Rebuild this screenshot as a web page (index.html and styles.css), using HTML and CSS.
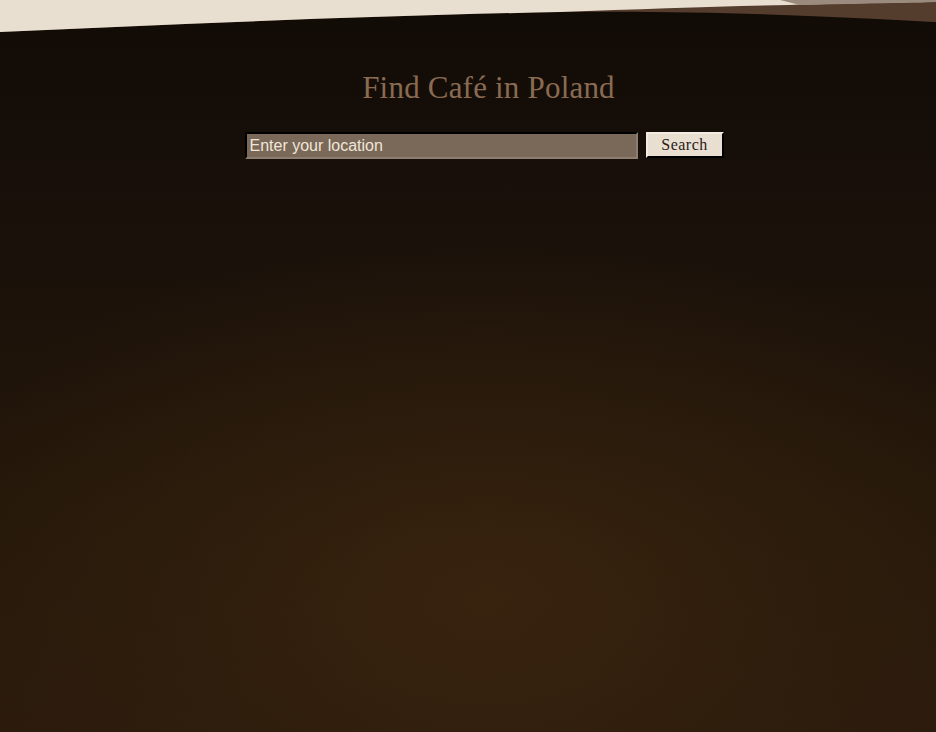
FILE: index.html
```html
<!DOCTYPE html>
<html lang="en">
<head>
<meta charset="utf-8">
<title>Find Café in Poland</title>
<link rel="stylesheet" href="styles.css">
</head>
<body>
<svg class="wave" viewBox="0 0 936 40" preserveAspectRatio="none" aria-hidden="true">
  <path d="M0 0 H936 V22 C860 18 720 10 560 12 C360 16 180 24 0 32 Z" fill="#553d2e"/>
  <path d="M0 0 H936 V2 C860 3 720 6 560 12 C360 16 180 24 0 32 Z" fill="#e8dfd0"/>
  <path d="M780 0 H936 V2 C890 3 840 4 800 5 Z" fill="#9a8b7e"/>
</svg>
<main class="main">
  <h1 class="title">Find Café in Poland</h1>
  <form class="search">
    <input class="search-input" type="text" value="Enter your location">
    <button class="search-btn" type="button">Search</button>
  </form>
</main>
</body>
</html>
```
FILE: styles.css
```css
html, body {
  margin: 0;
  height: 100%;
}
body {
  position: relative;
  min-height: 732px;
  background:
    radial-gradient(ellipse 65% 50% at 52% 82%, rgba(58,36,15,0.9) 0%, rgba(52,33,14,0.5) 55%, rgba(40,26,13,0) 100%),
    linear-gradient(to bottom, #110b06 0%, #1a110a 35%, #241709 70%, #2a1a0c 100%);
  font-family: "Liberation Serif", serif;
  overflow: hidden;
}
.wave {
  position: absolute;
  top: 0;
  left: 0;
  width: 936px;
  height: 40px;
  display: block;
}
.main {
  display: flex;
  flex-direction: column;
  align-items: center;
  padding: 70px 0 0 32px;
}
.title {
  margin: 0 0 0 9px;
  font-family: "Liberation Serif", serif;
  font-weight: normal;
  font-size: 31px;
  color: #8a6b52;
  letter-spacing: 0.2px;
  line-height: 36px;
}
.search {
  display: flex;
  gap: 8px;
  margin-top: 26px;
  align-items: flex-start;
}
.search-input {
  box-sizing: border-box;
  width: 393px;
  height: 27px;
  margin: 0;
  padding: 0 3px;
  background: #7a6858;
  color: #efe6d9;
  border: 2px inset #8d7d6e;
  border-top-color: #2a1f17;
  border-left-color: #2a1f17;
  font-family: "Liberation Sans", Arial, sans-serif;
  font-size: 16px;
}
.search-btn {
  box-sizing: border-box;
  width: 78px;
  height: 26px;
  margin: 0;
  padding: 0;
  background: #e8dfd1;
  color: #2a2018;
  border: 2px outset #f3ece2;
  border-right-color: #1a120c;
  border-bottom-color: #1a120c;
  font-family: "Liberation Serif", serif;
  font-size: 16px;
  font-weight: normal;
  letter-spacing: 0.5px;
}
```
